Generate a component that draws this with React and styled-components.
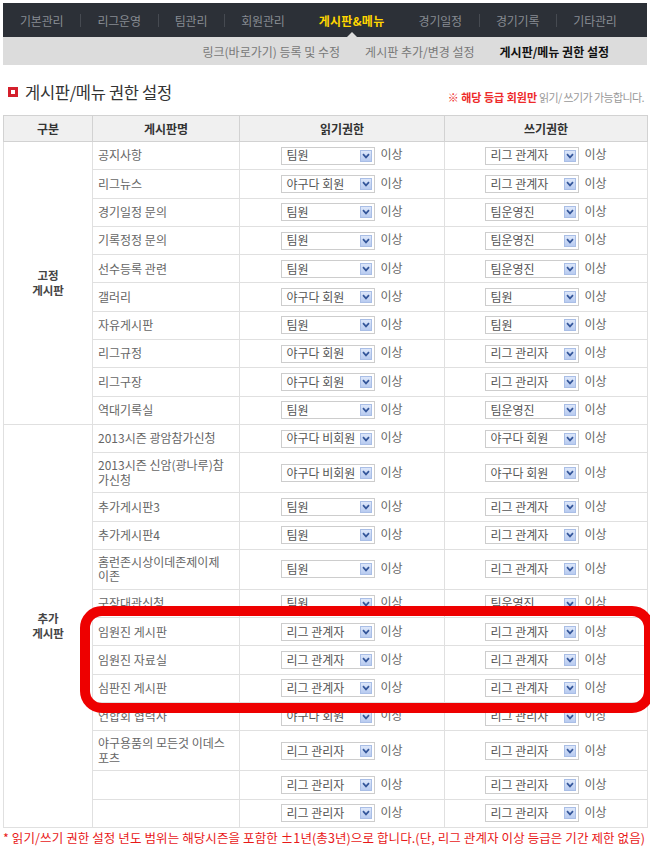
import React from "react";
import styled, { createGlobalStyle, css } from "styled-components";

const GlobalStyle = createGlobalStyle`
  html, body {
    margin: 0;
    padding: 0;
    background: #fff;
  }
  body {
    font-family: "Noto Sans CJK KR", "Liberation Sans", sans-serif;
    font-size: 12px;
    color: #666;
    overflow: hidden;
  }
`;

const Page = styled.div`
  position: relative;
  width: 650px;
  padding: 3px 3px 0;
  box-sizing: border-box;
  overflow: hidden;
`;

const TopNav = styled.ul`
  display: flex;
  align-items: stretch;
  height: 34px;
  margin: 0;
  padding: 0;
  list-style: none;
  background: #2c3037;
`;

const NavItem = styled.li`
  position: relative;
  display: flex;
  align-items: center;
  padding: 0 17px;
  font-size: 12px;
  color: ${(p) => (p.$active ? "#ffd600" : "#878b92")};
  font-weight: ${(p) => (p.$active ? "bold" : "normal")};
  letter-spacing: ${(p) => (p.$active ? "0.3px" : "-0.2px")};

  & + &::before {
    content: "";
    position: absolute;
    left: 0;
    top: 11px;
    width: 1px;
    height: 13px;
    background: #464a51;
  }

  ${(p) =>
    p.$active &&
    css`
      &::after {
        content: "";
        position: absolute;
        left: 50%;
        bottom: 0;
        margin-left: -5px;
        border: 5px solid transparent;
        border-bottom-color: #dcdcdc;
      }
    `}
`;

const SubNav = styled.ul`
  display: flex;
  justify-content: flex-end;
  align-items: center;
  gap: 25px;
  height: 28px;
  margin: 0;
  padding: 0 38px 0 0;
  list-style: none;
  background: #dcdcdc;
`;

const SubItem = styled.li`
  font-size: 12px;
  color: ${(p) => (p.$active ? "#111" : "#787878")};
  font-weight: ${(p) => (p.$active ? "bold" : "normal")};
`;

const TitleBar = styled.div`
  display: flex;
  justify-content: space-between;
  align-items: center;
  height: 50px;
  padding: 4px 3px 0 5px;
  box-sizing: border-box;
`;

const Title = styled.h2`
  display: flex;
  align-items: center;
  gap: 7px;
  margin: 0;
  font-size: 16.5px;
  font-weight: normal;
  color: #333;
  letter-spacing: -0.3px;
`;

const TitleMark = styled.span`
  width: 4px;
  height: 4px;
  border: 3px solid #d4202c;
  background: #fff;
`;

const Note = styled.p`
  margin: 9px 0 0;
  font-size: 11px;
  color: #999;
  letter-spacing: -0.6px;

  strong {
    color: #ee2a2a;
    letter-spacing: 0;
  }
`;

const Table = styled.table`
  width: 642px;
  margin-left: 0;
  border-collapse: collapse;
  table-layout: fixed;
  border: 1px solid #d2d2d2;
`;

const Th = styled.th`
  width: ${(p) => p.$w}px;
  height: 25px;
  padding: 0;
  background: #f0f0f0;
  border: 1px solid #d2d2d2;
  font-size: 12px;
  font-weight: bold;
  color: #333;
`;

const Td = styled.td`
  padding: 5px;
  border: 1px solid #e0e0e0;
  font-size: 12px;
  line-height: 14.5px;
  color: #666;
  vertical-align: middle;
`;

const GroupCell = styled(Td)`
  text-align: center;
  font-weight: bold;
  color: #444;
  white-space: pre-line;
  font-size: 11.5px;
`;

const NameCell = styled(Td)`
  white-space: pre-line;
  word-break: keep-all;
`;

const PermRow = styled.div`
  display: flex;
  justify-content: center;
  align-items: center;
  gap: 5px;
  height: 17.3px;
`;

const FakeSelect = styled.span`
  display: inline-flex;
  align-items: center;
  justify-content: space-between;
  width: 94px;
  height: 18px;
  padding: 0 2px 0 4px;
  box-sizing: border-box;
  border: 1px solid #cdcdcd;
  background: #fff;
  color: #555;
  white-space: nowrap;
  overflow: hidden;
`;

const Arrow = styled.span`
  display: flex;
  align-items: center;
  justify-content: center;
  flex: none;
  width: 12px;
  height: 12px;
  box-sizing: border-box;
  border: 1px solid #a9bee6;
  background: linear-gradient(#dde7fa, #b8cbf0);
`;

const Above = styled.span`
  color: #666;
  transform: translateY(-1px);
`;

const Highlight = styled.div`
  position: absolute;
  left: 80px;
  top: 606px;
  width: 574px;
  height: 107px;
  box-sizing: border-box;
  border: 10px solid #ee0000;
  border-radius: 22px;
  pointer-events: none;
`;

const Footnote = styled.p`
  margin: 2px 0 0;
  font-size: 12.5px;
  line-height: 16px;
  color: #e81818;
  white-space: nowrap;
  letter-spacing: 0.1px;
`;

const navItems = ["기본관리", "리그운영", "팀관리", "회원관리", "게시판&메뉴", "경기일정", "경기기록", "기타관리"];
const subItems = ["링크(바로가기) 등록 및 수정", "게시판 추가/변경 설정", "게시판/메뉴 권한 설정"];

const groups = [
  {
    label: "고정\n게시판",
    boards: [
      ["공지사항", "팀원", "리그 관계자"],
      ["리그뉴스", "야구다 회원", "리그 관계자"],
      ["경기일정 문의", "팀원", "팀운영진"],
      ["기록정정 문의", "팀원", "팀운영진"],
      ["선수등록 관련", "팀원", "팀운영진"],
      ["갤러리", "야구다 회원", "팀원"],
      ["자유게시판", "팀원", "팀원"],
      ["리그규정", "야구다 회원", "리그 관리자"],
      ["리그구장", "야구다 회원", "리그 관리자"],
      ["역대기록실", "팀원", "팀운영진"],
    ],
  },
  {
    label: "추가\n게시판",
    boards: [
      ["2013시즌 광암참가신청", "야구다 비회원", "야구다 회원"],
      ["2013시즌 신암(광나루)참\n가신청", "야구다 비회원", "야구다 회원"],
      ["추가게시판3", "팀원", "리그 관계자"],
      ["추가게시판4", "팀원", "리그 관계자"],
      ["홈런존시상이데존제이제\n이존", "팀원", "리그 관계자"],
      ["구장대관신청", "팀원", "팀운영진"],
      ["임원진 게시판", "리그 관계자", "리그 관계자"],
      ["임원진 자료실", "리그 관계자", "리그 관계자"],
      ["심판진 게시판", "리그 관계자", "리그 관계자"],
      ["연합회 협력사", "야구다 회원", "리그 관리자"],
      ["야구용품의 모든것 이데스\n포츠", "리그 관리자", "리그 관리자"],
      ["", "리그 관리자", "리그 관리자"],
      ["", "리그 관리자", "리그 관리자"],
    ],
  },
];

function Perm({ level }) {
  return (
    <PermRow>
      <FakeSelect>
        {level}
        <Arrow>
          <svg width="8" height="6" viewBox="0 0 8 6">
            <path d="M1 1.2 L4 4.4 L7 1.2" fill="none" stroke="#34569a" strokeWidth="1.7" />
          </svg>
        </Arrow>
      </FakeSelect>
      <Above>이상</Above>
    </PermRow>
  );
}

export default function App() {
  return (
    <>
      <GlobalStyle />
      <Page>
        <TopNav>
          {navItems.map((item) => (
            <NavItem key={item} $active={item === "게시판&메뉴"}>
              {item}
            </NavItem>
          ))}
        </TopNav>
        <SubNav>
          {subItems.map((item) => (
            <SubItem key={item} $active={item === "게시판/메뉴 권한 설정"}>
              {item}
            </SubItem>
          ))}
        </SubNav>

        <TitleBar>
          <Title>
            <TitleMark />
            게시판/메뉴 권한 설정
          </Title>
          <Note>
            <strong>※ 해당 등급 회원만</strong> 읽기/ 쓰기가 가능합니다.
          </Note>
        </TitleBar>

        <Table>
          <thead>
            <tr>
              <Th $w={88}>구분</Th>
              <Th $w={146}>게시판명</Th>
              <Th $w={204}>읽기권한</Th>
              <Th $w={202}>쓰기권한</Th>
            </tr>
          </thead>
          <tbody>
            {groups.map((group) =>
              group.boards.map((b, i) => (
                <tr key={group.label + i}>
                  {i === 0 && <GroupCell rowSpan={group.boards.length}>{group.label}</GroupCell>}
                  <NameCell>{b[0]}</NameCell>
                  <Td>
                    <Perm level={b[1]} />
                  </Td>
                  <Td>
                    <Perm level={b[2]} />
                  </Td>
                </tr>
              ))
            )}
          </tbody>
        </Table>

        <Footnote>
          * 읽기/쓰기 권한 설정 년도 범위는 해당시즌을 포함한 ±1년(총3년)으로 합니다.(단, 리그 관계자 이상 등급은 기간 제한 없음)
        </Footnote>

        <Highlight />
      </Page>
    </>
  );
}
